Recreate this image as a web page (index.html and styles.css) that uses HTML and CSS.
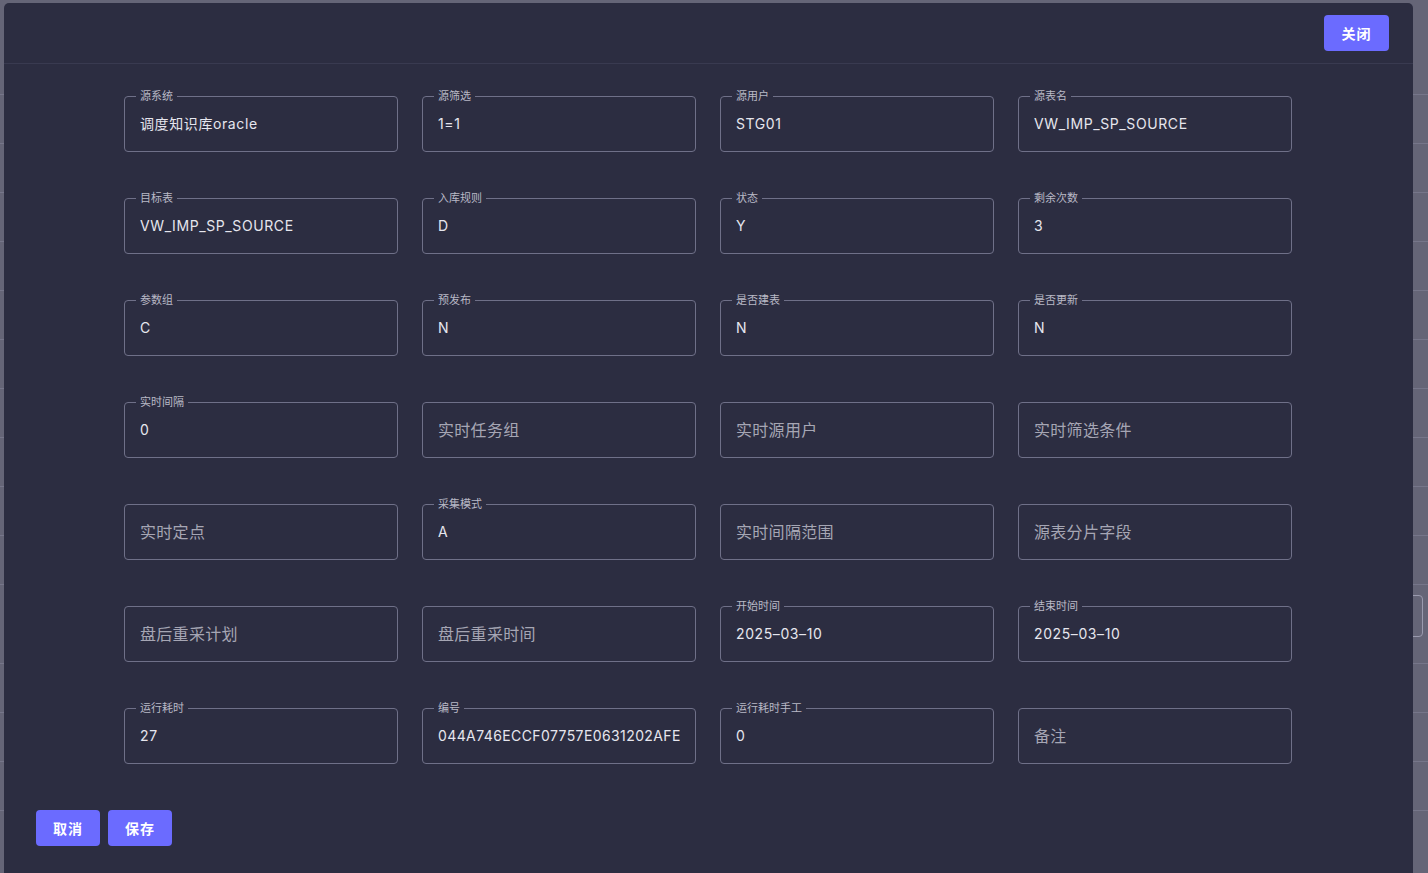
FILE: index.html
```html
<!DOCTYPE html>
<html lang="zh-CN">
<head>
<meta charset="utf-8">
<title>编辑</title>
<link rel="stylesheet" href="styles.css">
</head>
<body>
<div class="page">
  <div class="row"></div><div class="row"></div><div class="row"></div><div class="row"></div>
  <div class="row"></div><div class="row"></div><div class="row"></div><div class="row"></div>
  <div class="row"></div><div class="row"></div>
  <div class="row row-tall"><div class="bg-input"></div></div>
  <div class="row"></div><div class="row"></div><div class="row"></div><div class="row"></div>
</div>

<div class="modal">
  <div class="modal-header">
    <button class="btn btn-close">关闭</button>
  </div>
  <div class="modal-body">
    <div class="grid">
      <div class="field"><span class="label">源系统</span><span class="value">调度知识库oracle</span></div>
      <div class="field"><span class="label">源筛选</span><span class="value">1=1</span></div>
      <div class="field"><span class="label">源用户</span><span class="value">STG01</span></div>
      <div class="field"><span class="label">源表名</span><span class="value">VW_IMP_SP_SOURCE</span></div>

      <div class="field"><span class="label">目标表</span><span class="value">VW_IMP_SP_SOURCE</span></div>
      <div class="field"><span class="label">入库规则</span><span class="value">D</span></div>
      <div class="field"><span class="label">状态</span><span class="value">Y</span></div>
      <div class="field"><span class="label">剩余次数</span><span class="value">3</span></div>

      <div class="field"><span class="label">参数组</span><span class="value">C</span></div>
      <div class="field"><span class="label">预发布</span><span class="value">N</span></div>
      <div class="field"><span class="label">是否建表</span><span class="value">N</span></div>
      <div class="field"><span class="label">是否更新</span><span class="value">N</span></div>

      <div class="field"><span class="label">实时间隔</span><span class="value">0</span></div>
      <div class="field"><span class="placeholder">实时任务组</span></div>
      <div class="field"><span class="placeholder">实时源用户</span></div>
      <div class="field"><span class="placeholder">实时筛选条件</span></div>

      <div class="field"><span class="placeholder">实时定点</span></div>
      <div class="field"><span class="label">采集模式</span><span class="value">A</span></div>
      <div class="field"><span class="placeholder">实时间隔范围</span></div>
      <div class="field"><span class="placeholder">源表分片字段</span></div>

      <div class="field"><span class="placeholder">盘后重采计划</span></div>
      <div class="field"><span class="placeholder">盘后重采时间</span></div>
      <div class="field"><span class="label">开始时间</span><span class="value">2025–03–10</span></div>
      <div class="field"><span class="label">结束时间</span><span class="value">2025–03–10</span></div>

      <div class="field"><span class="label">运行耗时</span><span class="value">27</span></div>
      <div class="field"><span class="label">编号</span><span class="value value-id">044A746ECCF07757E0631202AFEB</span></div>
      <div class="field"><span class="label">运行耗时手工</span><span class="value">0</span></div>
      <div class="field"><span class="placeholder">备注</span></div>
    </div>
  </div>
  <div class="modal-footer">
    <button class="btn">取消</button>
    <button class="btn">保存</button>
  </div>
</div>
</body>
</html>
```

FILE: styles.css
```css
* { box-sizing: border-box; }

html, body {
  margin: 0;
  padding: 0;
  height: 100%;
  overflow: hidden;
}

body {
  background: #656577;
  font-family: Inter, "Noto Sans CJK SC", sans-serif;
}

.page {
  padding-top: 94px;
}

.row {
  height: 49px;
  border-top: 1px solid #76768a;
}

.row-tall {
  height: 79px;
  display: flex;
  justify-content: flex-end;
  padding-top: 10px;
  padding-right: 5px;
}

.bg-input {
  width: 60px;
  height: 42px;
  border: 1px solid #9a9aae;
  border-radius: 4px;
}

.modal {
  position: fixed;
  left: 4px;
  top: 3px;
  width: 1409px;
  height: 890px;
  background: #2c2d41;
  border-radius: 5px;
  display: flex;
  flex-direction: column;
}

.modal-header {
  height: 61px;
  border-bottom: 1px solid #393a50;
  display: flex;
  justify-content: flex-end;
  align-items: flex-start;
  padding: 12px 24px 0 0;
}

.btn {
  width: 64px;
  height: 36px;
  padding: 0;
  border: none;
  border-radius: 4px;
  background: #6b6bff;
  color: #ffffff;
  font-family: "Noto Sans CJK SC", sans-serif;
  font-size: 14px;
  font-weight: 600;
  letter-spacing: 1px;
}

.btn-close {
  width: 65px;
}

.modal-body {
  padding: 32px 0 0 120px;
  display: flex;
}

.grid {
  display: grid;
  grid-template-columns: repeat(4, 274px);
  column-gap: 24px;
  row-gap: 46px;
}

.field {
  position: relative;
  height: 56px;
  border: 1px solid #6f7088;
  border-radius: 4px;
  padding: 0 15px 2px;
  display: flex;
  align-items: center;
}

.label {
  position: absolute;
  top: -9px;
  left: 11px;
  padding: 0 4px;
  background: #2c2d41;
  color: #b9b9c6;
  font-family: "Noto Sans CJK SC", sans-serif;
  font-size: 11px;
  line-height: 14px;
}

.value {
  color: #e6e6ee;
  font-size: 14px;
  letter-spacing: 0.6px;
  white-space: nowrap;
  overflow: hidden;
  max-width: 100%;
}

.value-id {
  letter-spacing: 0.4px;
}

.placeholder {
  color: #a6a6b4;
  font-family: "Noto Sans CJK SC", sans-serif;
  font-size: 16px;
  letter-spacing: 0.3px;
}

.modal-footer {
  padding: 46px 0 0 32px;
  display: flex;
  gap: 8px;
}
```
